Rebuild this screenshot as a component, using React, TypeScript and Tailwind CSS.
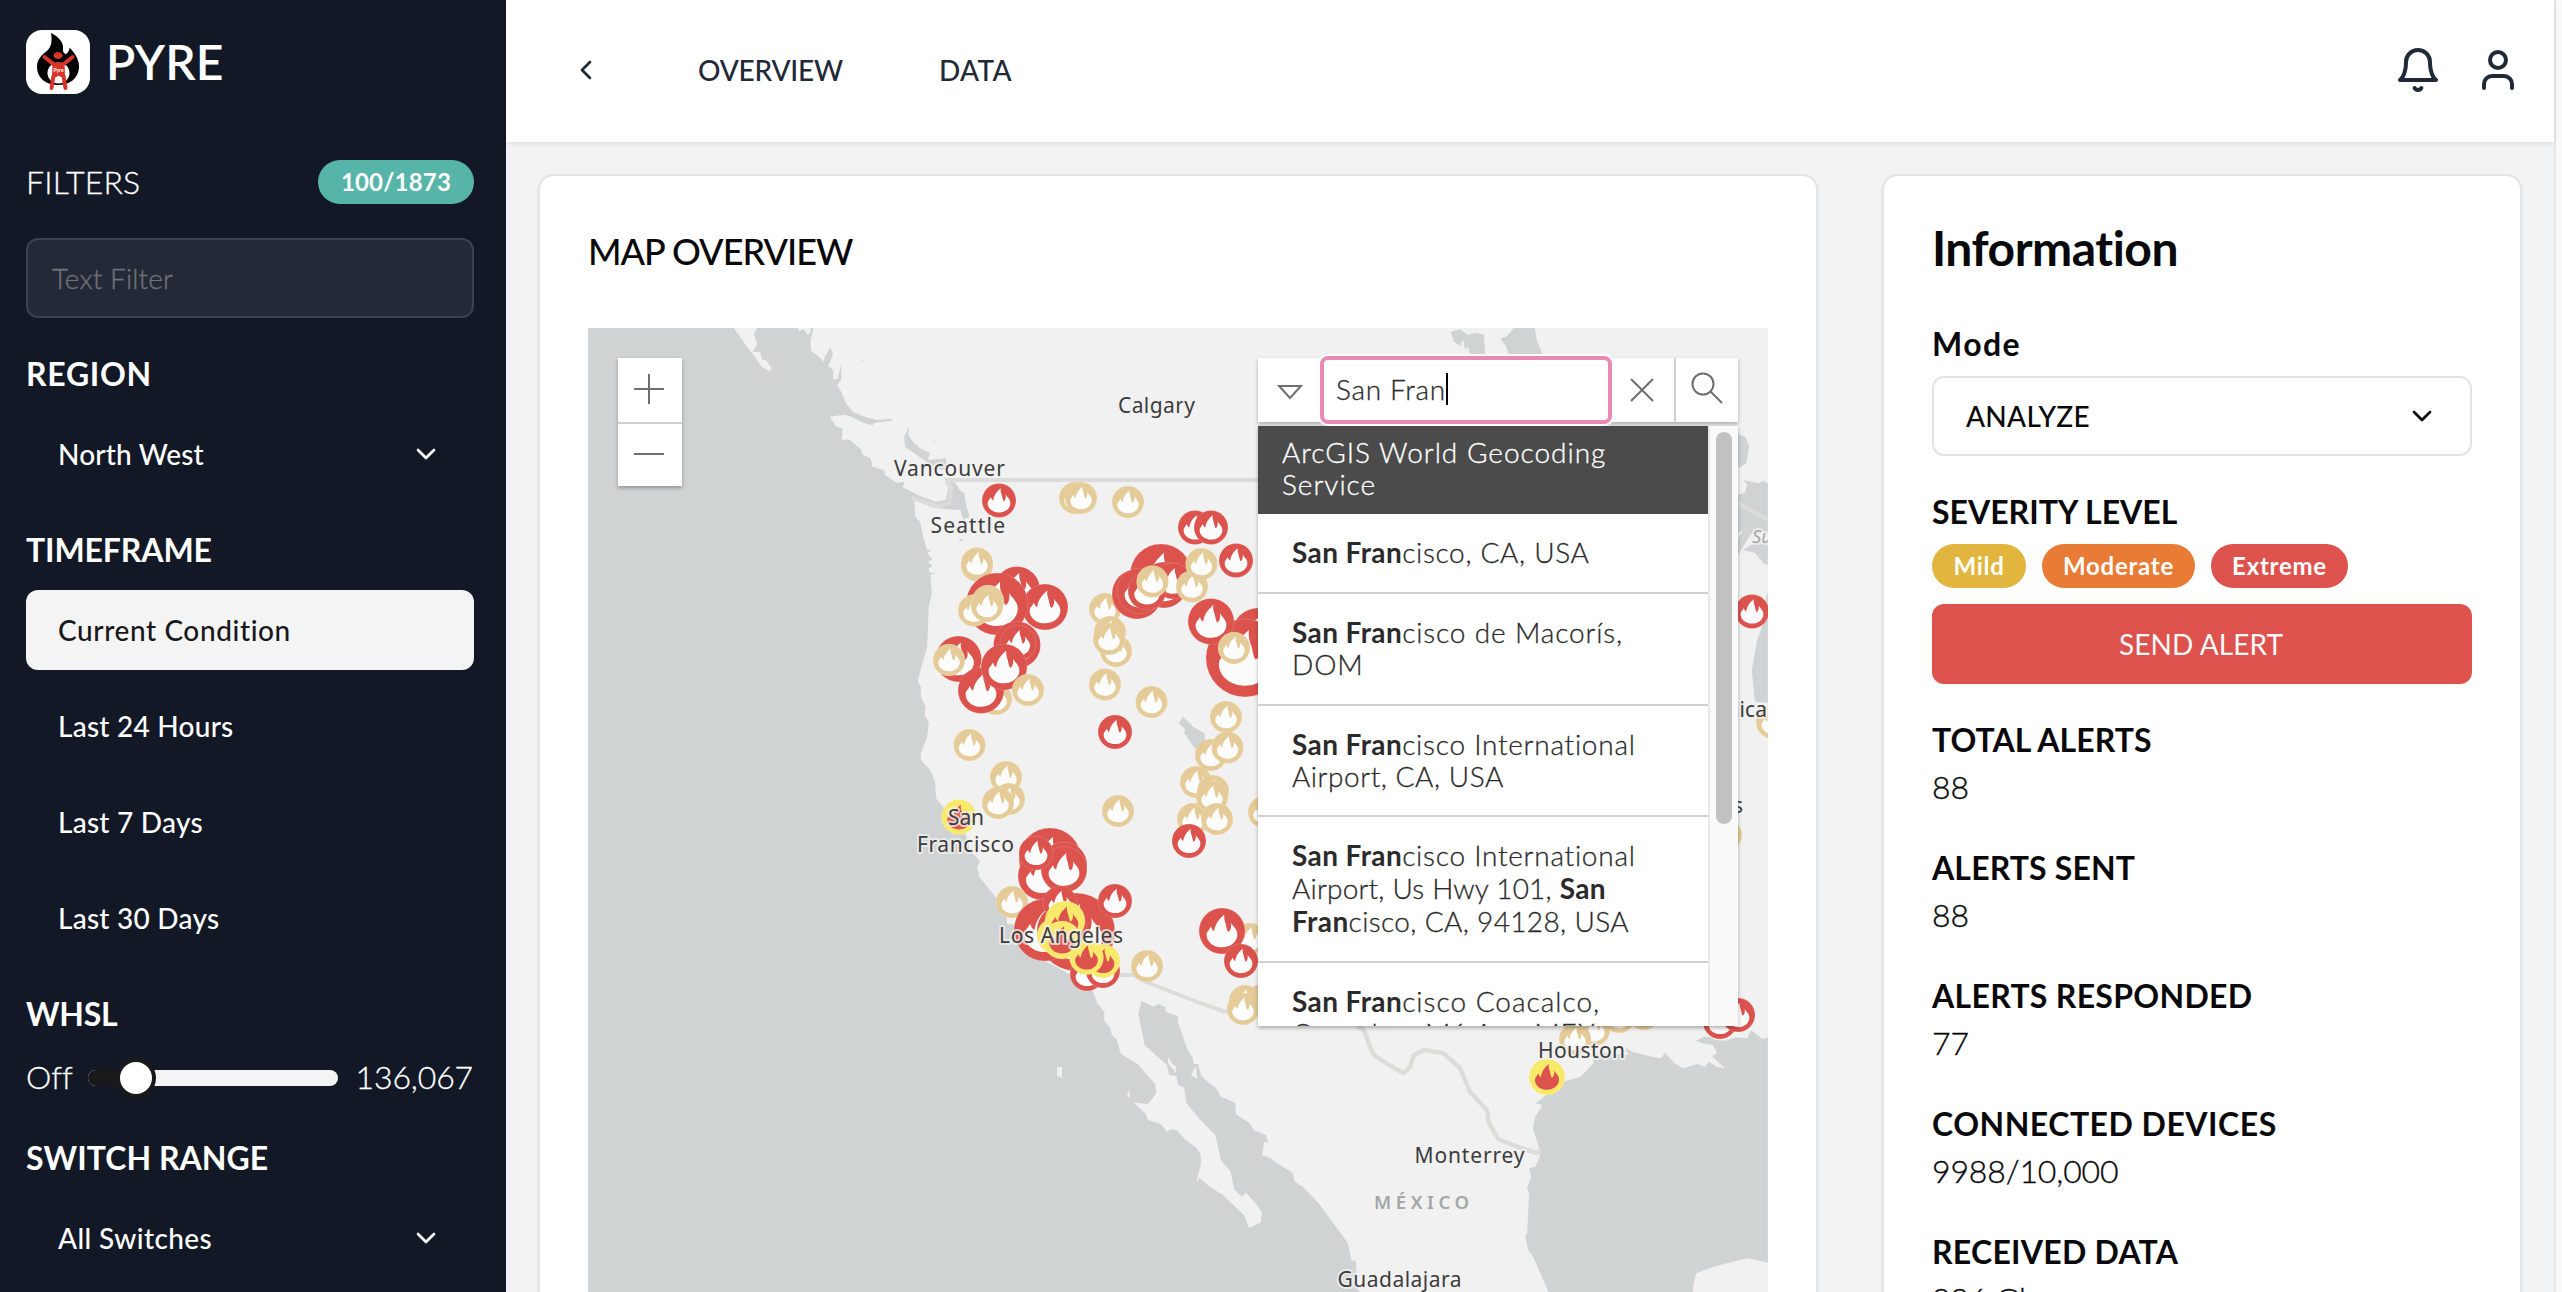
import type { ReactNode } from "react";
import { ChevronDown, ChevronLeft } from "lucide-react";

type Tone = "red" | "tan" | "yellow";
type Marker = [x: number, y: number, r: number, tone: Tone];

const DISC: Record<Tone, string> = { red: "#dc524c", tan: "#e5cb97", yellow: "#f9e96b" };
const FLAME: Record<Tone, string> = { red: "#fcfcfc", tan: "#fcfcfc", yellow: "#dc524c" };

const MARKERS: Marker[] = [
  [999, 500.5, 17, "red"],
  [1075, 498, 16, "tan"],
  [1081, 498, 16, "tan"],
  [1128, 502, 16, "tan"],
  [1195, 527.5, 17, "red"],
  [1211, 527.5, 17, "red"],
  [1236, 560.5, 17, "red"],
  [977, 565.5, 16, "tan"],
  [977, 563.5, 16, "tan"],
  [1017, 589.5, 23, "red"],
  [1045, 607, 23, "red"],
  [997, 604, 31, "red"],
  [974, 610.5, 16, "tan"],
  [988, 601, 16, "tan"],
  [987, 606, 16, "tan"],
  [1017, 645, 23.5, "red"],
  [1018, 643, 18, "red"],
  [958.5, 659, 23, "red"],
  [949, 660, 16, "tan"],
  [996, 699, 16, "tan"],
  [981, 690.5, 23, "red"],
  [1004, 667, 23, "red"],
  [1028, 690, 16, "tan"],
  [969.5, 745, 16, "tan"],
  [1105, 609, 16, "tan"],
  [1161, 575, 31, "red"],
  [1164, 585, 23, "red"],
  [1137, 594, 25, "red"],
  [1140, 591, 23, "red"],
  [1173, 581, 18, "red"],
  [1147, 591, 19, "red"],
  [1152.5, 581.5, 16, "tan"],
  [1192, 586.5, 16, "tan"],
  [1201.5, 564, 16, "tan"],
  [1110, 632, 16, "tan"],
  [1116, 651, 16, "tan"],
  [1109, 639, 16, "tan"],
  [1105, 684.5, 16, "tan"],
  [1151.5, 702, 16, "tan"],
  [1115, 732, 17, "red"],
  [1258, 634, 26, "red"],
  [1245, 658, 39, "red"],
  [1211, 621.5, 23, "red"],
  [1234, 648, 16, "tan"],
  [1226, 717, 16, "tan"],
  [1211, 755, 16, "tan"],
  [1227.5, 747.5, 16, "tan"],
  [1196, 782, 16, "tan"],
  [1213, 791, 16, "tan"],
  [1193, 819, 16, "tan"],
  [1212, 797, 16, "tan"],
  [1217, 819, 16, "tan"],
  [1264, 812, 16, "tan"],
  [1189, 841, 17, "red"],
  [959, 817, 17.5, "yellow"],
  [1006, 777, 16, "tan"],
  [1009, 799, 16, "tan"],
  [998, 803, 16, "tan"],
  [1118, 811, 16, "tan"],
  [1050, 859, 31, "red"],
  [1042, 876, 24, "red"],
  [1064, 865, 23, "red"],
  [1064, 869.5, 23, "red"],
  [1036, 853, 17, "red"],
  [1012, 902, 16, "tan"],
  [1076, 932, 39, "red"],
  [1045, 930, 31, "red"],
  [1062, 930, 25, "red"],
  [1087, 974, 17, "red"],
  [1103, 971, 17, "red"],
  [1060, 903, 17, "red"],
  [1055, 936, 18, "yellow"],
  [1065, 921, 20, "yellow"],
  [1062, 940, 19, "yellow"],
  [1103, 961, 17, "yellow"],
  [1086.5, 957.5, 17, "yellow"],
  [1115, 901, 17, "red"],
  [1147, 966, 16, "tan"],
  [1250, 939, 16, "tan"],
  [1222, 931, 23, "red"],
  [1241, 961, 17, "red"],
  [1262, 1000, 16, "tan"],
  [1245, 1001, 16, "tan"],
  [1243, 1009, 16, "tan"],
  [1752, 611.5, 17, "red"],
  [1773, 722, 17, "tan"],
  [1726, 835, 16, "tan"],
  [1594, 1030, 16, "tan"],
  [1575, 1039, 16, "tan"],
  [1619, 1017, 16, "tan"],
  [1644, 1014, 16, "tan"],
  [1720, 1022, 17, "red"],
  [1738, 1015, 17, "red"],
  [1547, 1077, 18, "yellow"],
];

function FireMarker({ marker: [x, y, r, tone] }: { marker: Marker }) {
  return (
    <g transform={`translate(${x} ${y}) scale(${r / 100})`}>
      <circle r={100} fill={DISC[tone]} stroke="#fff" strokeOpacity={0.25} strokeWidth={60 / r} />
      <path
        fill={FLAME[tone]}
        d="M-48-20C-45-10-41-3-34 0C-29-28-20-46 10-72C8-54 12-44 16-32C20-16 22 0 28 4C38-2 42-18 39-37C44-22 67-10 67 14C67 46 38 71 0 71C-38 71-67 46-67 16C-67 2-55-6-48-20Z"
      />
    </g>
  );
}

const CITIES: [name: string, x: number, y: number, width: number][] = [
  ["Calgary", 1118, 412.5, 77],
  ["Vancouver", 894, 475.5, 111],
  ["Seattle", 930.5, 533, 74.5],
  ["San", 948, 825, 36],
  ["Francisco", 917, 851.5, 97],
  ["Los Angeles", 999, 942.5, 124],
  ["Chicago", 1713, 716.5, 80],
  ["St Louis", 1667, 813, 76],
  ["Houston", 1538, 1057.5, 87],
  ["Monterrey", 1414.5, 1163, 110],
  ["Guadalajara", 1337.5, 1287, 124],
];

function BaseMap() {
  return (
    <svg viewBox="588 328 1180 964" className="block h-[964px] w-[1180px]">
      <rect x="588" y="328" width="1180" height="964" fill="#f1f1f1" />
      <g fill="#cfd3d3">
        {/* North Pacific, British Columbia to San Francisco */}
        <g transform="translate(580 320) scale(.39541 .33333)">
          <path d="M0 0H548L554 34L566 28L576 44L582 38L584 20L590 24L583 62L584 92L600 106L616 125L620 108L633 82L640 104L627 138L640 150V178L652 176L661 130V180L650 195L662 218L672 248L690 276L716 289L750 300L790 296L788 302L745 308L740 316L716 308L690 292L668 284L632 290L648 320L664 325L662 360L680 358L710 388L716 405L735 415L740 440L768 450L772 465L800 488L822 486L816 502L860 528L900 545L925 540L932 500L920 470L950 490L960 510L972 520L975 545L985 590L970 600L962 570L930 568L890 562L845 540L848 590L860 605L868 650L878 690L890 688L878 700L892 718L880 725L892 738L882 745L884 758L902 758L886 764L890 820L882 860L878 980L866 1030L854 1084L862 1100V1130L874 1160L872 1185L882 1210L878 1250L862 1300V1320L886 1350L898 1385L902 1452H0Z" />
          <path d="M820 350L832 318L830 345L845 370L860 385L885 400L880 420L925 415L928 440L915 450L880 430L840 395L822 380Z" />
          <path d="M1526 1190L1514 1210L1530 1228L1528 1240L1555 1285L1580 1290V1240L1550 1220Z" />
          <path d="M714 118l4 2-3 6zM895 362l4 3-5 4zM962 656l8 4-12 6zM975 622l4 8-6 8z" />
        </g>
        {/* California coast, Baja and the upper Gulf of California */}
        <g transform="translate(580 800) scale(.39541 .33333)">
          <path d="M0-3H902L925 30L975 100L988 155L1012 183L1004 200L1010 230L1055 298L1080 340V372L1110 375L1150 400L1180 485L1250 530L1298 575L1308 610L1326 635V662L1342 685L1345 705L1357 718L1368 762L1410 792L1455 852L1457 880L1445 900L1435 912L1400 908L1430 940L1436 960L1470 973L1484 996L1495 988L1508 990L1530 1018L1560 1045L1570 1065V1095L1560 1140L1575 1140V1480H0Z" />
          <path d="M1420 602L1450 620L1465 612L1480 622L1482 636L1512 648V665L1535 745L1550 775L1552 792L1563 792L1570 822V962L1533 908L1528 862L1513 855L1508 828L1490 825L1484 795L1428 735L1412 640Z" />
        </g>
        {/* Gulf of Mexico and mainland Mexico's west coast */}
        <g transform="translate(1200 800) scale(.38265 .33333)">
          <path d="M-3 1132L25 1160L60 1185L115 1245L128 1284L158 1268L162 1238L150 1215L120 1178L110 1190L90 1170L80 1115L55 1080L40 1005L20 982L-3 955V820L20 845L40 862L55 890L92 908L94 942L130 970L140 990L172 1005L178 1028L168 1025L162 1065L185 1075L200 1088L242 1118L248 1145L270 1162L310 1210L386 1328L396 1380L408 1385V1415L398 1440L420 1480H-3Z" />
          <path d="M1484 712L1470 718L1440 690L1430 715L1400 712L1370 722L1345 720L1335 712L1318 710L1295 722L1312 730L1340 735L1352 760L1338 768L1372 805L1350 800L1330 785L1320 800L1300 792L1262 805L1240 790L1215 758L1205 775L1180 770L1130 755L1110 742L1120 765L1050 758L1028 770V790L995 830L950 845L905 885L878 910L895 915L876 950L870 985L888 1050V1070L876 1100L860 1105L865 1130L855 1165L860 1180L855 1300L850 1310L858 1350L870 1370L880 1395L912 1480H1288L1290 1450L1297 1420L1330 1405L1370 1392L1430 1375L1484 1388Z" />
        </g>
        {/* Hudson Bay inlets and the Great Lakes */}
        <g transform="translate(1200 320) scale(.38265 .33333)">
          <path d="M655 35L680 28L700 45L722 38L742 44L745 102H706L700 80L692 88L688 58L680 78L664 66ZM785 55L800 50L820 24H875L880 60L895 104H808L800 80Z" />
          <path d="M1404 342L1425 350L1435 378L1428 430L1412 442L1404 440ZM1404 524L1424 518L1430 495L1420 480L1462 490L1470 482L1484 490V640L1440 642L1404 708V660L1420 630L1404 640ZM1484 735L1475 732L1450 698L1418 690L1450 668L1484 660Z" />
          <path d="M1484 815L1470 870L1476 900L1456 960L1442 1050L1450 1145L1484 1148ZM-3 1240L18 1262L-3 1270Z" />
        </g>
      </g>
      {/* Haida Gwaii and small islands */}
      <g fill="#f1f1f1">
        <path d="M734 328L757 328L754 334L757 344L753 352L760 352L762 360L766 360L772 369L769 371L762 367L755 357L745 344Z" />
        <path d="M1057 1067H1062V1078L1057 1076ZM1129 1089L1130 1098L1127 1096ZM1168 1057L1173 1065L1176 1066V1073L1168 1063ZM1196 1066L1191 1075L1197 1079Z" />
      </g>
      <g fill="none" stroke="#dcdcdb" strokeWidth="4" strokeLinejoin="round">
        <path d="M946 480H1260M912 498L940 507L949 503L951 488L946 481" />
        <path d="M1120 975L1134 975L1146 982L1200 1003L1223 1011L1258 1014" />
        <path strokeWidth="4.500" d="M1357 1026L1364 1030L1370 1047L1374 1055L1389 1065L1403.500 1073L1410 1067L1414 1055L1424 1050L1443 1053L1460 1068L1470 1092L1487 1110L1489 1123L1498 1139L1518 1147L1537 1153L1541 1150" />
        <path d="M1738 503L1768 520" />
      </g>
      {MARKERS.map((m, i) => (
        <FireMarker key={i} marker={m} />
      ))}
      <g
        className="font-['Noto_Sans'] text-[21px]"
        fill="#3c3c3c"
        stroke="#f1f1f1"
        strokeOpacity={0.75}
        strokeWidth={4}
        strokeLinejoin="round"
        style={{ paintOrder: "stroke" }}
      >
        {CITIES.map(([name, x, y, width]) => (
          <text key={name} x={x} y={y} textLength={width}>
            {name}
          </text>
        ))}
        <text x="1374" y="1209" textLength="95" fill="#a4a7a6" className="text-[18.5px] font-semibold">
          MÉXICO
        </text>
        <text x="1752" y="542.500" fill="#a4a7a6" className="text-[18.5px] italic">
          Superior
        </text>
      </g>
    </svg>
  );
}

function Logo() {
  return (
    <svg viewBox="0 0 64 64" className="size-16 rounded-2xl bg-white">
      <path d="M25 3C33 7 38 13 37 19C36.500 23 40 26 42 22C43 20.500 43.500 19.500 43.500 17.500C50 24 53.500 31 53 38C52 49 43 55 32 55C20 55 11 48 11 37C11 30 15 25 21 21C25 17 26.500 12 25 3Z" />
      <ellipse cx="32.500" cy="43" rx="11" ry="10.500" fill="#fff" />
      <g fill="#d93429" stroke="#d93429" strokeLinecap="round" strokeLinejoin="round">
        <ellipse cx="32" cy="25.500" rx="4" ry="3" />
        <path fill="none" strokeWidth="4" d="M18.500 27L28 34.500M46.500 27L37 34.500M27.500 46L25.500 58M37.500 46L39.500 58" />
        <path strokeWidth="2" d="M27.500 33.500H37.500L38 46H35C33.500 44.500 31.500 44.500 30 46H27Z" />
      </g>
      <text x="32.500" y="41.500" textAnchor="middle" fill="#fff" className="text-[5px] font-bold">
        Pyre
      </text>
    </svg>
  );
}

function SectionTitle({ className = "", children }: { className?: string; children: ReactNode }) {
  return <h2 className={`flex h-10 items-center text-[32px] font-bold ${className}`}>{children}</h2>;
}

function Sidebar() {
  return (
    <aside className="flex h-full w-[506px] shrink-0 flex-col bg-[#121826] pr-8 pl-[26px] pt-[30px] text-white">
      <div className="flex h-16 shrink-0 items-center gap-4">
        <Logo />
        <span className="text-[48px] font-semibold tracking-[0.1px]">PYRE</span>
      </div>
      <div className="mt-[66px] flex h-11 shrink-0 items-center justify-between">
        <span className="text-[32px] leading-[38px] font-light tracking-[0.18px] [-webkit-text-stroke:0.3px]">FILTERS</span>
        <span className="flex h-11 w-[156px] items-center justify-center rounded-full bg-[#56b4a8] text-[24px] font-bold tracking-[0.2px]">
          100/1873
        </span>
      </div>
      <div className="mt-[34px] flex h-20 shrink-0 items-center rounded-xl border-2 border-[#3a4150] bg-[#232936] px-6 text-[28px] leading-[33px] font-light tracking-[0.12px] text-[#717178] [-webkit-text-stroke:0.35px]">
        Text Filter
      </div>

      <SectionTitle className="mt-9 tracking-[0.7px]">REGION</SectionTitle>
      <div className="mt-5 flex h-20 shrink-0 items-center justify-between px-8 text-[28px] font-medium tracking-[0.15px]">
        North West
        <ChevronDown className="size-8" />
      </div>

      <SectionTitle className="mt-9 tracking-[-0.12px]">TIMEFRAME</SectionTitle>
      <div className="mt-5 flex shrink-0 flex-col gap-4 text-[28px] font-medium tracking-[0.25px]">
        <div className="flex h-20 items-center rounded-xl bg-[#f4f4f5] px-8 tracking-[0.6px] text-[#18181b]">Current Condition</div>
        <div className="flex h-20 items-center px-8">Last 24 Hours</div>
        <div className="flex h-20 items-center px-8">Last 7 Days</div>
        <div className="flex h-20 items-center px-8">Last 30 Days</div>
      </div>

      <SectionTitle className="mt-9 tracking-[-0.3px]">WHSL</SectionTitle>
      <div className="mt-5 flex h-12 shrink-0 items-center pb-0.5 text-[32px] leading-10 font-light tracking-[-0.13px] [-webkit-text-stroke:0.3px]">
        <span className="w-[62px]">Off</span>
        <div className="relative top-px h-4 w-[250px] rounded-full bg-[#f4f4f5]">
          <div className="h-4 w-12 rounded-l-full bg-[#19191b]" />
          <div className="absolute -top-3 left-7 size-10 rounded-full border-4 border-[#19191b] bg-white" />
        </div>
        <span className="mr-px ml-auto">136,067</span>
      </div>

      <SectionTitle className="mt-9 tracking-[0.05px]">SWITCH RANGE</SectionTitle>
      <div className="mt-5 flex h-20 shrink-0 items-center justify-between px-8 text-[28px] font-medium tracking-[0.4px]">
        All Switches
        <ChevronDown className="size-8" />
      </div>
    </aside>
  );
}

function Header() {
  return (
    <header className="z-10 flex h-[142px] shrink-0 items-center bg-white pr-8 pl-16 text-[#1f2937] shadow-[0_1px_6px_rgba(0,0,0,0.1)]">
      <ChevronLeft className="mb-0.5 size-8" />
      <nav className="mb-0.5 ml-24 flex gap-24 text-[28px] font-medium">
        <span className="w-[145px] tracking-[-0.2px]">OVERVIEW</span>
        <span className="tracking-[0.3px]">DATA</span>
      </nav>
      <div className="mb-0.5 ml-auto flex gap-8 text-[#1f2937]">
        <svg viewBox="0 0 24 24" className="size-12" fill="none" stroke="currentColor" strokeWidth="2" strokeLinecap="round" strokeLinejoin="round">
          <path d="M6 8a6 6 0 0 1 12 0c0 7 3 9 3 9H3s3-2 3-9" />
          <path d="M10.300 21a1.940 1.940 0 0 0 3.400 0" />
        </svg>
        <svg viewBox="0 0 24 24" className="size-12" fill="none" stroke="currentColor" strokeWidth="2" strokeLinecap="round" strokeLinejoin="round">
          <path d="M19 21v-2a4 4 0 0 0-4-4H9a4 4 0 0 0-4 4v2" />
          <circle cx="12" cy="7" r="4" />
        </svg>
      </div>
    </header>
  );
}

function Match({ children }: { children: ReactNode }) {
  return <b className="font-bold tracking-[0.4px] [-webkit-text-stroke:0]">{children}</b>;
}

function SearchWidget() {
  return (
    <div className="absolute top-[30px] right-[30px] w-[480px] text-[28px] font-light tracking-[0.67px] text-[#2b2b2b] [-webkit-text-stroke:0.3px]">
      <div className="flex h-16 bg-white shadow-[0_2px_4px_rgba(0,0,0,0.3)]">
        <div className="flex w-16 items-center justify-center pt-1">
          <svg viewBox="0 0 26 16" className="h-4 w-[26px]" fill="none" stroke="#6e6e6e" strokeWidth="2">
            <path d="M2 2H24L13 14Z" />
          </svg>
        </div>
        <div className="-mx-0.5 -my-0.5 flex w-[292px] items-center rounded-lg border-4 border-[#e989b5] bg-white pb-0.5 pl-3 shadow-[0_0_0_2px_#fff]">
          San Fran
          <span className="h-8 w-0.5 bg-black" />
        </div>
        <div className="flex w-16 items-center justify-center">
          <svg viewBox="0 0 24 24" className="size-6" stroke="#6e6e6e" strokeWidth="2">
            <path d="M1 1L23 23M23 1L1 23" />
          </svg>
        </div>
        <div className="flex w-16 items-center justify-center border-l-2 border-[#d0d0d0] pb-1">
          <svg viewBox="0 0 32 32" className="size-8" fill="none" stroke="#6e6e6e" strokeWidth="2">
            <circle cx="12" cy="12" r="10.500" />
            <path d="M19.500 19.500L31 31" />
          </svg>
        </div>
      </div>
      <div className="mt-1 flex h-[600px] overflow-hidden bg-white shadow-[0_2px_4px_rgba(0,0,0,0.3)]">
        <div className="w-[450px] shrink-0">
          <div className="h-[88px] bg-[#4b4b4b] px-6 pt-2.5 leading-8 tracking-[1px] text-white">
            ArcGIS World Geocoding
            <br />
            Service
          </div>
          <div className="h-20 border-b-2 border-[#d0d0d0] px-[34px] pt-[22px] leading-8">
            <Match>San Fran</Match>cisco, CA, USA
          </div>
          <div className="h-28 border-b-2 border-[#d0d0d0] px-[34px] pt-[22px] leading-8 tracking-[0.85px]">
            <Match>San Fran</Match>cisco de Macorís,
            <br />
            DOM
          </div>
          <div className="h-[111px] border-b-2 border-[#d0d0d0] px-[34px] pt-[22px] leading-8">
            <Match>San Fran</Match>
            <span className="tracking-[0.75px]">cisco International</span>
            <br />
            <span className="tracking-[0.55px]">Airport, CA, USA</span>
          </div>
          <div className="h-[146px] border-b-2 border-[#d0d0d0] px-[34px] pt-[22px] leading-[33px]">
            <Match>San Fran</Match>
            <span className="tracking-[0.75px]">cisco International</span>
            <br />
            <span className="tracking-[0.2px]">Airport, Us Hwy 101, </span>
            <Match>San</Match>
            <br />
            <Match>Fran</Match>
            <span className="tracking-[0.35px]">cisco, CA, 94128, USA</span>
          </div>
          <div className="px-[34px] pt-[22px] leading-8 tracking-[1px]">
            <Match>San Fran</Match>cisco Coacalco,
            <br />
            Coacalco, México, MEX
          </div>
        </div>
        <div className="flex flex-1 justify-center border-l-2 border-[#e8e8e8] bg-[#fafafa] pt-1.5">
          <div className="h-[392px] w-4 rounded-full bg-[#c1c1c1]" />
        </div>
      </div>
    </div>
  );
}

function MapCard() {
  return (
    <section className="flex w-[1280px] shrink-0 flex-col rounded-t-2xl border-2 border-b-0 border-[#e4e5e7] bg-white px-12 pt-[53px] shadow-sm">
      <h1 className="flex h-11 shrink-0 items-center text-[36px] font-medium tracking-[-1px] text-[#09090b]">MAP OVERVIEW</h1>
      <div className="relative mt-[55px] h-[964px] w-[1180px] shrink-0 overflow-hidden">
        <BaseMap />
        <div className="absolute top-[30px] left-[30px] w-16 bg-white shadow-[0_2px_4px_rgba(0,0,0,0.3)]">
          <div className="flex h-[66px] items-center justify-center border-b-2 border-[#d0d0d0] pr-0.5 pb-0.5">
            <svg viewBox="0 0 30 30" className="size-[30px]" stroke="#6e6e6e" strokeWidth="2">
              <path d="M0 15H30M15 0V30" />
            </svg>
          </div>
          <div className="flex h-[62px] items-center justify-center pr-0.5 pb-0.5">
            <div className="h-0.5 w-[30px] bg-[#6e6e6e]" />
          </div>
        </div>
        <SearchWidget />
      </div>
    </section>
  );
}

function Stat({ label, value, className }: { label: string; value: string; className: string }) {
  return (
    <div className="flex shrink-0 flex-col gap-2">
      <SectionTitle className={className}>{label}</SectionTitle>
      <div className="flex h-10 items-center pb-0.5 text-[32px] font-light tracking-[-0.14px] [-webkit-text-stroke:0.35px]">{value}</div>
    </div>
  );
}

function InformationCard() {
  return (
    <section className="flex w-[640px] shrink-0 flex-col rounded-t-2xl border-2 border-b-0 border-[#e4e5e7] bg-white px-12 pt-11 text-[#09090b] shadow-sm">
      <h1 className="flex h-14 shrink-0 items-center text-[48px] font-bold tracking-[-0.5px]">Information</h1>
      <SectionTitle className="mt-12 tracking-[1.4px]">Mode</SectionTitle>
      <div className="mt-3 flex h-20 shrink-0 items-center justify-between rounded-xl border-2 border-[#e4e4e7] px-8 text-[28px] font-medium tracking-[0.27px]">
        ANALYZE
        <ChevronDown className="size-8" />
      </div>
      <SectionTitle className="mt-9 tracking-[0px]">SEVERITY LEVEL</SectionTitle>
      <div className="mt-3 flex h-11 shrink-0 gap-4 text-[24px] font-bold tracking-[0.75px] text-white">
        <span className="flex w-[94px] items-center justify-center rounded-full bg-[#e1b53e]">Mild</span>
        <span className="flex w-[153px] items-center justify-center rounded-full bg-[#e87b35]">Moderate</span>
        <span className="flex w-[137px] items-center justify-center rounded-full bg-[#dd524c]">Extreme</span>
      </div>
      <button className="mt-4 h-20 shrink-0 rounded-xl bg-[#dd524c] pr-0.5 text-[28px] font-normal tracking-[0.1px] text-[#fafafa]">
        SEND ALERT
      </button>
      <div className="mt-9 flex flex-col gap-10">
        <Stat label="TOTAL ALERTS" value="88" className="tracking-[0.05px]" />
        <Stat label="ALERTS SENT" value="88" className="tracking-[0.15px]" />
        <Stat label="ALERTS RESPONDED" value="77" className="tracking-[0.3px]" />
        <Stat label="CONNECTED DEVICES" value="9988/10,000" className="tracking-[0.5px]" />
        <Stat label="RECEIVED DATA" value="996 Gb" className="tracking-[0.25px]" />
      </div>
    </section>
  );
}

export default function App() {
  return (
    <div className="flex h-[1292px] w-[2562px] overflow-hidden bg-[#f2f3f5] font-['Lato',sans-serif] leading-tight">
      <Sidebar />
      <div className="flex w-[2048px] shrink-0 flex-col">
        <Header />
        <main className="flex h-[1160px] shrink-0 gap-16 px-8 pt-8">
          <MapCard />
          <InformationCard />
        </main>
      </div>
      <div className="flex-1 border-l-2 border-[#e8e8e8] bg-[#fafafa]" />
    </div>
  );
}
